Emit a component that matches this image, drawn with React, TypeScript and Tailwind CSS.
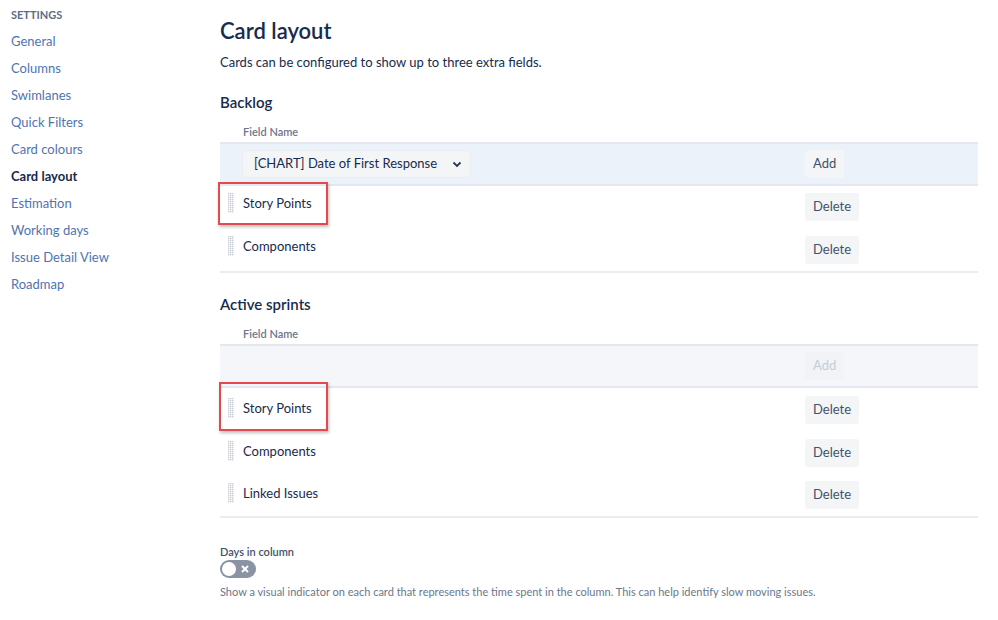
import React from "react";

const nav = [
  "General",
  "Columns",
  "Swimlanes",
  "Quick Filters",
  "Card colours",
  "Card layout",
  "Estimation",
  "Working days",
  "Issue Detail View",
  "Roadmap",
];

function Handle() {
  const dots = [];
  for (let r = 0; r < 10; r++) {
    for (let c = 0; c < 3; c++) {
      dots.push(<rect key={`${r}-${c}`} x={c * 2} y={r * 2} width="1.4" height="1.4" fill="#c9ced6" />);
    }
  }
  return (
    <svg width="6" height="20" viewBox="0 0 6 20" className="shrink-0">
      {dots}
    </svg>
  );
}

function Btn({ children, disabled }: { children: React.ReactNode; disabled?: boolean }) {
  return (
    <button
      className={
        disabled
          ? "h-7 rounded-[3px] bg-[#f1f3f6] px-[8px] text-[13px] text-[#c7ccd4]"
          : "h-7 rounded-[3px] bg-[#f4f5f7] px-[8px] text-[13px] text-[#42526e]"
      }
    >
      {children}
    </button>
  );
}

function Row({ name, mark, low }: { name: string; mark?: string; low?: boolean }) {
  return (
    <div className="relative flex h-[42.5px] items-start">
      <div className={low ? "flex w-[585px] items-center gap-[9px] pl-[8px] pt-[10px]" : "flex w-[585px] items-center gap-[9px] pl-[8px] pt-[7px]"}>
        <Handle />
        <span className="text-[13px] leading-5 text-[#172b4d]">{name}</span>
      </div>
      <div className={low ? "pt-[8px]" : "pt-[7px]"}>
        <Btn>Delete</Btn>
      </div>
      {mark && <div className={mark} />}
    </div>
  );
}

function Section({
  title,
  addRow,
  rows,
}: {
  title: string;
  addRow: React.ReactNode;
  rows: React.ReactNode;
}) {
  return (
    <div>
      <h2 className="text-[15px] font-semibold leading-6 text-[#172b4d]">{title}</h2>
      <div className="mt-[10px] pl-[23px] text-[11px] font-semibold leading-4 text-[#6b778c]">Field Name</div>
      <div className="mt-[2px] border-b-2 border-[#ebecf0]">
        {addRow}
        {rows}
      </div>
    </div>
  );
}

export default function App() {
  return (
    <div className="flex h-[620px] w-[998px] overflow-hidden bg-white font-['Lato',sans-serif] text-[#172b4d]">
      <aside className="w-[220px] shrink-0 pl-[11px] pt-[8px]">
        <div className="text-[11px] font-bold uppercase leading-[14px] text-[#5e6c84]">Settings</div>
        <ul className="mt-[6px]">
          {nav.map((n) => (
            <li
              key={n}
              className={
                n === "Card layout"
                  ? "h-[27px] text-[13px] font-bold leading-[27px] text-[#172b4d]"
                  : "h-[27px] text-[13px] leading-[27px] text-[#4f74b0]"
              }
            >
              {n}
            </li>
          ))}
        </ul>
      </aside>
      <main className="w-[758px] pt-[15px]">
        <h1 className="text-[22px] font-semibold leading-8 text-[#172b4d]">Card layout</h1>
        <p className="mt-[5px] text-[13px] leading-5 text-[#172b4d]">
          Cards can be configured to show up to three extra fields.
        </p>
        <div className="mt-[18px]">
          <Section
            title="Backlog"
            addRow={
              <div className="flex h-[44px] items-center border-y-2 border-[#e4e8ee] bg-[#ebf2f9]">
                <div className="w-[585px] pl-[23px]">
                  <div className="flex h-[26px] w-[227px] items-center justify-between whitespace-nowrap rounded-[3px] bg-[#f4f5f7] pl-[11px] pr-[8px] text-[13px] shadow-[0_0_0_1px_#e9ecf0]">
                    <span>[CHART] Date of First Response</span>
                    <svg width="10" height="8" viewBox="0 0 10 8">
                      <path d="M1.5 2.5 L5 6 L8.5 2.5" fill="none" stroke="#253858" strokeWidth="1.8" />
                    </svg>
                  </div>
                </div>
                <Btn>Add</Btn>
              </div>
            }
            rows={
              <>
                <Row
                  name="Story Points"
                  mark="absolute left-[-2px] top-[-4px] h-[43px] w-[110px] border-2 border-[#e5484d] shadow-[1px_2px_3px_rgba(0,0,0,0.25)]"
                />
                <Row name="Components" />
              </>
            }
          />
        </div>
        <div className="mt-[19px]">
          <Section
            title="Active sprints"
            addRow={
              <div className="flex h-[44px] items-center border-y-2 border-[#e4e8ee] bg-[#f4f6f9]">
                <div className="w-[585px]" />
                <Btn disabled>Add</Btn>
              </div>
            }
            rows={
              <>
                <Row
                  low
                  name="Story Points"
                  mark="absolute left-[-1px] top-[-6px] h-[49px] w-[109px] border-2 border-[#e5484d] shadow-[1px_2px_3px_rgba(0,0,0,0.25)]"
                />
                <Row low name="Components" />
                <Row low name="Linked Issues" />
              </>
            }
          />
        </div>
        <div className="mt-[26px]">
          <div className="text-[11px] font-semibold leading-4 text-[#42526e]">Days in column</div>
          <div className="flex h-[18px] w-[36px] items-center justify-between rounded-full bg-[#8993a4] px-[2px]">
            <span className="h-[14px] w-[14px] rounded-full bg-white" />
            <svg width="10" height="10" viewBox="0 0 10 10" className="mr-[4px]">
              <path d="M2 2 L8 8 M8 2 L2 8" stroke="white" strokeWidth="2" />
            </svg>
          </div>
          <p className="mt-[6px] text-[11px] leading-4 text-[#6b778c]">
            Show a visual indicator on each card that represents the time spent in the column. This can help identify slow moving issues.
          </p>
        </div>
      </main>
    </div>
  );
}
